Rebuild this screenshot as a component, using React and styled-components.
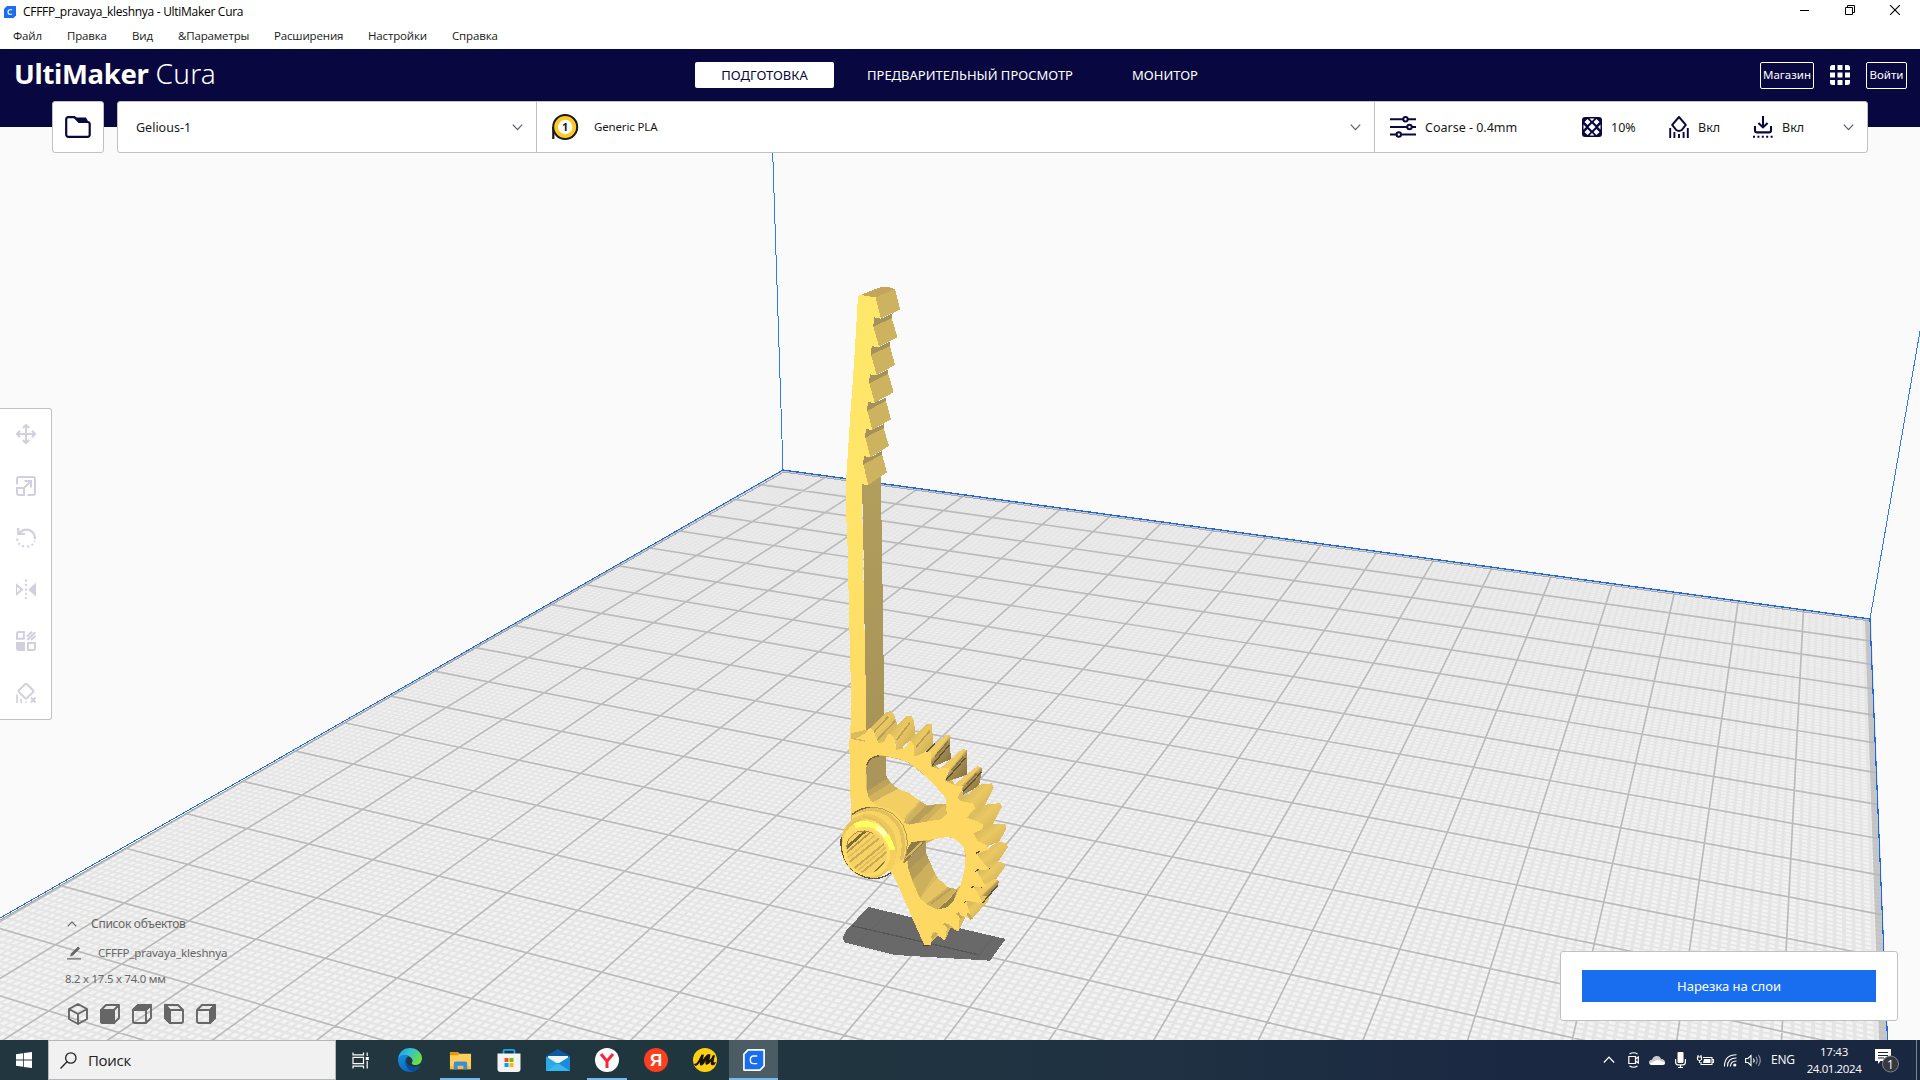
import React from 'react';
import styled, { createGlobalStyle } from 'styled-components';

const NAVY = '#08073f';
const GREY = '#c0c1c2';

const Global = createGlobalStyle`
  * { box-sizing: border-box; }
  html, body { margin: 0; padding: 0; overflow: hidden; background: #fff; }
  svg { display: block; flex: none; }
`;

const Shell = styled.div`
  width: 1920px;
  height: 1080px;
  display: flex;
  flex-direction: column;
  font-family: "Noto Sans", "Open Sans", sans-serif;
  color: #191919;
  overflow: hidden;
`;

const Label = styled.span`
  flex: none;
  white-space: nowrap;
  width: ${p => (p.$w ? `${p.$w}px` : 'auto')};
  font-size: ${p => p.$size || 12}px;
  font-weight: ${p => p.$weight || 400};
  letter-spacing: ${p => p.$ls || 0}px;
  color: ${p => p.$color || 'inherit'};
  margin-left: ${p => p.$ml || 0}px;
  padding-bottom: ${p => (p.$up ? 2 : 0)}px;
`;

const Icon = styled.svg`
  margin-left: ${p => p.$ml || 0}px;
  overflow: visible;
`;

const TitleBar = styled.div`
  height: 24px;
  flex: none;
  display: flex;
  align-items: center;
  padding-left: 4px;
  font-family: "Open Sans", "Noto Sans", sans-serif;
  color: #000;
`;

const WindowButtons = styled.div`
  margin-left: auto;
  display: flex;
  align-items: center;
  gap: 35px;
  padding: 0 20px 4px 0;
`;

const MenuBar = styled.div`
  height: 25px;
  flex: none;
  display: flex;
  align-items: center;
  padding-left: 13px;
  font-family: "Open Sans", "Noto Sans", sans-serif;
`;

const Stage = styled.div`
  flex: none;
  height: 991px;
  display: grid;
  grid-template: 991px / 1920px;
`;

const Scene = styled.svg`
  grid-area: 1 / 1;
  background: #fafafa;
`;

const Overlay = styled.div`
  grid-area: 1 / 1;
  display: flex;
  flex-direction: column;
  z-index: 1;
`;

const Header = styled.div`
  height: 78px;
  flex: none;
  background: ${NAVY};
`;

const HeaderRow = styled.div`
  height: 52px;
  display: flex;
  align-items: center;
  color: #fff;
`;

const Logo = styled.div`
  width: 680px;
  padding: 0 0 4px 14px;
  display: flex;
  align-items: baseline;
  gap: 7px;
`;

const Tab = styled.div`
  height: 26px;
  width: ${p => p.$w}px;
  margin-left: ${p => p.$ml}px;
  border-radius: 2px;
  display: flex;
  align-items: center;
  justify-content: center;
  background: ${p => (p.$active ? '#fff' : 'transparent')};
  color: ${p => (p.$active ? NAVY : '#fff')};
`;

const HeaderButton = styled.div`
  height: 27px;
  width: ${p => p.$w}px;
  margin-left: ${p => p.$ml}px;
  border: 1px solid #fff;
  border-radius: 2px;
  display: flex;
  align-items: center;
  justify-content: center;
`;

const SettingsBar = styled.div`
  height: 52px;
  display: flex;
  padding-left: 52px;
  gap: 13px;
`;

const Panel = styled.div`
  height: 52px;
  display: flex;
  background: #fff;
  border: 1px solid ${GREY};
  border-radius: 3px;
  width: ${p => p.$w}px;
`;

const OpenButton = styled(Panel)`
  align-items: center;
  justify-content: center;
`;

const Section = styled.div`
  width: ${p => p.$w}px;
  padding-left: ${p => p.$pl}px;
  display: flex;
  align-items: center;
  border-right: ${p => (p.$last ? 'none' : `1px solid ${GREY}`)};
`;

const Workspace = styled.div`
  flex: 1;
  display: flex;
  flex-direction: column;
  padding-top: 281px;
`;

const ToolColumn = styled.div`
  width: 52px;
  height: 312px;
  background: #fff;
  border: 1px solid ${GREY};
  border-left: none;
  border-radius: 0 3px 3px 0;
  padding: 15px 0 0 16px;
  display: flex;
  flex-direction: column;
  gap: 31.8px;
`;

const BottomRow = styled.div`
  margin-top: 191px;
  display: flex;
  justify-content: space-between;
  padding: 0 22px 0 65px;
`;

const ObjectList = styled.div`
  display: flex;
  flex-direction: column;
  color: #666;
`;

const ObjectRow = styled.div`
  display: flex;
  align-items: center;
  height: ${p => p.$h}px;
  gap: ${p => p.$gap || 0}px;
  padding-left: ${p => p.$pl || 0}px;
`;

const SlicePanel = styled.div`
  margin-top: 40px;
  width: 338px;
  height: 70px;
  background: #fff;
  border: 1px solid ${GREY};
  border-radius: 3px;
  display: flex;
  align-items: center;
  justify-content: center;
`;

const SliceButton = styled.div`
  width: 294px;
  height: 32px;
  background: #196ef0;
  color: #fff;
  display: flex;
  align-items: center;
  justify-content: center;
`;

const Taskbar = styled.div`
  flex: none;
  height: 40px;
  display: flex;
  background: linear-gradient(90deg, #22363f 0%, #20363f 38%, #1f3142 60%, #1a2842 80%, #1a2741 100%);
  color: #fff;
  font-family: "Open Sans", "Noto Sans", sans-serif;
`;

const StartButton = styled.div`
  width: 48px;
  display: flex;
  align-items: center;
  justify-content: center;
`;

const SearchBox = styled.div`
  width: 288px;
  background: #f1f1f1;
  border: 1px solid #b5b8ba;
  display: flex;
  align-items: center;
  padding-left: 11px;
  color: #222;
`;

const TaskItem = styled.div`
  width: ${p => p.$w || 49}px;
  display: flex;
  align-items: center;
  justify-content: center;
  background: ${p => (p.$active ? '#4c5c65' : 'transparent')};
  box-shadow: ${p => (p.$active ? 'inset 0 -2px #76b9ed' : 'none')};
`;

const Running = styled.div`
  width: 40px;
  height: 40px;
  display: flex;
  align-items: center;
  justify-content: center;
  border-bottom: 2px solid #76b9ed;
  padding-top: 2px;
`;

const Tray = styled.div`
  margin-left: auto;
  display: flex;
  align-items: center;
  width: 317px;
`;

const Clock = styled.div`
  width: 70px;
  margin-left: 3px;
  display: flex;
  flex-direction: column;
  align-items: center;
  line-height: 17px;
  padding-bottom: 1px;
`;

const ShowDesktop = styled.div`
  width: 1px;
  height: 40px;
  background: #7b8493;
  margin-left: 17px;
`;

/* ---------- build plate ---------- */

// Perspective mapping of plate coordinates (in cm) to the viewport.
const project = (u, v) => {
  const w = 1 - 0.00982 * u - 0.0225 * v;
  return [(782.6 + 36.02 * u - 41.44 * v) / w, (470.4 + 1.364 * u + 3.15 * v) / w];
};
const pt = (u, v) => project(u, v).map(n => n.toFixed(2)).join(' ');
const line = (a, b) => `M${a}L${b}`;
const quad = (a, b, c, d) => `M${a}L${b}L${c}L${d}Z`;
const range = n => Array.from({ length: n + 1 }, (_, i) => i);

const DEPTH = 26;
const HW = 0.019;
const minorU = range(200).filter(i => i % 10).map(i => quad(pt(i / 10 - HW, 0), pt(i / 10 + HW, 0), pt(i / 10 + HW, DEPTH), pt(i / 10 - HW, DEPTH))).join('');
const minorV = range(DEPTH * 10).filter(i => i % 10).map(i => quad(pt(0, i / 10 - HW), pt(0, i / 10 + HW), pt(20, i / 10 + HW), pt(20, i / 10 - HW))).join('');
const major =
  range(19).map(i => line(pt(i, 0), pt(i, DEPTH))).join('') +
  range(DEPTH).map(i => line(pt(0, i), pt(20, i))).join('');
const plate = quad(pt(0, 0), pt(20, 0), pt(20, DEPTH), pt(0, DEPTH));

/* ---------- model ---------- */

const bladeTeeth = [
  ['160,170 215,145 233,202 177,230', '162,142 183,146 218,130 215,146 160,171'],
  ['153,255 210,228 225,285 170,315', '155,229 177,231 210,215 210,229 153,256'],
  ['148,340 205,312 221,367 164,398', '149,313 170,315 204,299 205,313 148,341'],
  ['142,423 198,392 213,448 157,480', '143,397 164,398 198,383 198,393 142,424'],
  ['136,503 191,474 207,528 151,562', '137,477 157,480 192,462 191,475 136,504'],
  ['130,584 186,553 201,607 145,645', '131,558 151,562 186,543 186,554 130,585'],
];

const gearTeeth = [
  ['148,116 200,67 212,63 222,72 230,98 232,112 180,165 162,124', 0],
  ['206,130 260,79 275,77 282,95 287,137 232,184 224,150', 0],
  ['266,152 322,101 336,102 340,170 284,204 280,166', 0],
  ['314,190 378,134 391,137 391,165 392,208 335,232 333,186', 1],
  ['360,236 428,176 440,180 440,206 441,254 376,276 388,238', 1],
  ['398,288 474,227 486,234 484,252 477,288 430,314 424,290', 1],
  ['420,332 478,284 516,280 521,293 498,340 440,387 430,350', 0],
  ['440,385 490,345 540,339 546,350 520,400 460,436', 0],
  ['458,435 510,402 556,402 560,414 538,454 472,482', 0],
  ['470,500 535,454 560,460 564,472 535,514 490,540', 0],
  ['470,548 530,513 553,520 554,531 530,566 480,592', 0],
  ['460,600 525,566 537,573 535,583 486,640', 1],
  ['430,665 485,618 508,620 505,632 455,688', 0],
];

const HOLE_A = 'M197 199 L235 208 L265 218 L300 245 L330 270 L378 325 L380 340 L350 346 L320 345 L300 332 L265 308 L235 297 L210 276 L198 255 Z';
const HOLE_B = 'M318 460 L345 447 L370 441 L390 442 L412 452 L430 470 L436 495 L433 545 L425 582 L411 597 L385 593 L362 578 L345 550 L330 515 L318 490 Z';

const Model = () => (
  <g shapeRendering="crispEdges">
    <g transform="translate(820 690) scale(.33333)">
      <polygon points="145,651 280,683 420,715 557,747 510,812 225,795 72,757 69,740 78,722" fill="#696969" />
      <path d="M95 707 L470 793" stroke="#565656" strokeWidth="4" />
      <path d="M120 752 L205 668 M520 738 L470 806" stroke="#626262" strokeWidth="3" />
    </g>
    <g transform="translate(820 270) scale(.33333)">
      <polygon points="126,640 183,620 185,790 190,1090 192,1340 138,1390 130,800" fill="url(#shaft)" />
      <polygon points="114,78 122,75 167,82 190,146 165,142 160,170 177,230 155,229 153,255 172,315 149,313 148,340 166,398 143,397 142,423 160,480 137,477 136,503 153,562 131,558 130,584 147,645 126,643 127,735 131,960 138,1280 138,1410 90,1410 94,1300 88,1070 82,800 78,730 78,640 91,430 98,340 107,200" fill="url(#face)" />
      <polygon points="122,75 180,52 205,51 225,57 167,82" fill="#c3a659" />
      <polygon points="167,82 225,57 240,118 183,146" fill="#cdb25f" />
      {bladeTeeth.map(([side, notch]) => (
        <g key={side}>
          <polygon points={notch} fill="#a59159" />
          <polygon points={side} fill="#cdb25f" />
        </g>
      ))}
    </g>
    <g transform="translate(820 690) scale(.33333)">
      <path
        d={`M92 130 L145 118 L190 150 L229 165 L282 185 L333 215 L385 260 L430 310 L465 350 L490 410 L505 470 L508 535 L500 590 L487 640 L455 688 L440 675 L415 725 L392 712 L375 752 L355 735 L325 767 L313 765 L218 550 L95 470 Z ${HOLE_A} ${HOLE_B}`}
        fill="#dabb5f" fillRule="evenodd" />
      {gearTeeth.map(([p, dark]) => (
        <polygon key={p} points={p} fill={dark ? 'url(#toothDark)' : 'url(#tooth)'} />
      ))}
      <path d="M158 130 L205 80 M172 150 L226 92 M230 150 L270 98 M288 172 L330 122" stroke="#b99e55" strokeWidth="5" />
      <path d="M336 226 L388 165 M378 270 L437 203 M430 305 L484 247 M488 638 L535 584 M314 190 L345 161" stroke="#5d5137" strokeWidth="4" />
      <path d="M345 200 L384 155 M396 240 L430 200 M440 283 L470 250" stroke="#8b7747" strokeWidth="5" />
      <path
        d="M88 146 L110 145 L138 128 L145 118 L152 115 L162 124 L175 160 L192 155 L203 135 L210 130 L220 140 L226 160 L229 180 L255 174 L266 158 L274 152 L281 166 L282 200 L300 194 L315 187 L334 186 L333 230 L352 236 L375 234 L389 236 L374 272 L388 278 L410 288 L430 288 L412 325 L425 334 L460 340 L465 354 L440 383 L468 392 L490 404 L487 418 L460 430 L472 452 L500 466 L508 478 L470 492 L492 520 L508 538 L470 540 L488 575 L500 592 L462 590 L478 620 L487 640 L438 632 L448 665 L455 688 L420 675 L415 725 L383 700 L375 752 L338 725 L333 765 L313 765 L305 748 L218 550 L95 470 L95 375 L90 300 Z
           M138 230 L146 210 L160 199 L180 195 L200 198 L235 206 L265 217 L300 243 L332 272 L378 325 L380 372 L362 388 L320 396 L268 404 L240 372 L190 352 L150 332 L139 300 Z
           M262 520 L275 455 L318 450 L345 447 L370 440 L392 442 L412 452 L430 470 L437 495 L433 545 L420 590 L400 635 L380 652 L352 659 L325 645 L300 625 L275 570 Z"
        fill="#fdd964" fillRule="evenodd" />
      <path d="M139 232 L146 212 L160 200 L197 198 L198 255 L205 268 L141 305 Z" fill="#aa965a" />
      <path d="M141 303 L203 265 L212 280 L145 320 Z" fill="#bea45a" />
      <path d="M145 320 L212 279 L235 297 L158 336 Z" fill="#d1b25d" />
      <path d="M158 336 L235 297 L265 308 L300 332 L240 398 L185 360 Z" fill="#f3cf63" />
      <path d="M250 398 L303 335 L320 345 L378 341 L380 372 L362 388 L270 404 Z" fill="#cfb15d" />
      <path d="M262 402 L316 347 L350 346 L290 400 Z" fill="#b99f57" />
      <path d="M320 396 L368 348 L380 350 L378 374 L362 388 Z" fill="#dfbe60" />
      <path d="M270 403 L362 388 L382 370 L400 400 L380 441 L345 447 L273 456 Z" fill="#fdd964" />
      <path d="M262 510 L318 450 L318 490 L266 540 Z" fill="#aa965a" />
      <path d="M266 540 L318 490 L330 515 L278 570 Z" fill="#b79e57" />
      <path d="M278 570 L330 515 L345 550 L300 625 Z" fill="#cdb05c" />
      <path d="M300 625 L352 563 L385 593 L320 642 Z" fill="#e6c461" />
      <path d="M318 642 L383 592 L411 597 L352 659 Z" fill="#cfb15d" />
      <path d="M352 659 L388 628 L412 598 L400 635 L380 652 Z" fill="#96834c" />
      <path d="M334 640 L392 596" stroke="#b99f57" strokeWidth="6" />
      <path d="M252 520 L300 470 L318 452 L275 456 L260 480 Z" fill="#8d7b4a" />
      <path d="M255 505 L305 458" stroke="#d7b75e" strokeWidth="6" />
      <path d="M141 225 Q148 200 178 197" stroke="#6c5d3b" strokeWidth="4" fill="none" />
      <path d="M94 145 L134 153" stroke="#d4b45c" strokeWidth="4" />
      <path d="M335 745 L350 728 M388 712 L372 700 M425 685 L412 668 M442 670 L455 688" stroke="#cba953" strokeWidth="8" />
      <path d="M310 767 H326 M467 490 L480 484 M465 545 L476 538 M455 595 L460 588 M432 638 L438 634" stroke="#4d432c" strokeWidth="4" />
      <path d="M507 535 h3 M484 592 h3" stroke="#e01010" strokeWidth="3" />

      <ellipse cx="180" cy="447" rx="84" ry="96" fill="#f8d462" />
      <path d="M98 374 Q140 342 190 357 Q245 378 258 430 Q268 470 250 520" stroke="#b89d55" strokeWidth="3" fill="none" />
      <path d="M103 370 Q145 350 185 364 Q232 384 246 430 Q255 470 244 510" stroke="#e2c05f" strokeWidth="10" fill="none" />
      <path d="M96 374 Q120 354 150 352" stroke="#7a693f" strokeWidth="4" fill="none" />
      <ellipse cx="146" cy="469" rx="84" ry="97" fill="#ecc95f" transform="rotate(-12 146 469)" />
      <path d="M64 440 Q58 480 80 520 Q112 562 158 566 Q190 566 212 548" stroke="#62543a" strokeWidth="4" fill="none" />
      <ellipse cx="143" cy="474" rx="76" ry="86" fill="#ffdc66" transform="rotate(-12 143 474)" />
      <path d="M78 420 Q95 396 122 390 M130 380 Q180 385 205 430" stroke="#e2c05f" strokeWidth="6" fill="none" />
      <path d="M104 407 Q135 396 165 408 Q205 432 218 482" stroke="#ffff61" strokeWidth="17" fill="none" />
      <path d="M170 412 Q184 420 197 438" stroke="#ffffae" strokeWidth="16" fill="none" />
      <path d="M219 480 Q222 515 205 536" stroke="#f5cf5e" strokeWidth="16" fill="none" />
      <clipPath id="bore"><ellipse cx="140" cy="485" rx="60" ry="65" transform="rotate(-14 140 485)" /></clipPath>
      <g clipPath="url(#bore)">
        <rect x="70" y="410" width="150" height="150" fill="#f6d263" />
        <path d="M70 458 L118 412 M74 478 L135 424" stroke="#7a683f" strokeWidth="8" />
        <path d="M75 492 L150 428" stroke="#b3974f" strokeWidth="5" />
        <path d="M88 516 L176 446 M103 535 L192 462 M122 550 L205 482" stroke="#c9aa57" strokeWidth="6" />
        <path d="M82 504 L165 436 M112 543 L200 470" stroke="#e0bd5e" strokeWidth="5" />
        <path d="M158 552 L204 505" stroke="#8a743f" strokeWidth="5" />
      </g>
      <path d="M80 470 Q82 440 112 426 Q135 418 158 430" stroke="#a58b4b" strokeWidth="3" fill="none" />
    </g>
  </g>
);

const Viewport3D = () => (
  <Scene width="1920" height="991" viewBox="0 49 1920 991">
    <defs>
      <linearGradient id="plateFill" x1="0" y1="470" x2="0" y2="1040" gradientUnits="userSpaceOnUse">
        <stop offset="0" stopColor="#ececec" />
        <stop offset=".45" stopColor="#f1f1f1" />
        <stop offset="1" stopColor="#f4f4f4" />
      </linearGradient>
      <linearGradient id="face" x1="0" y1="0" x2="0" y2="1">
        <stop offset="0" stopColor="#ffe869" />
        <stop offset=".5" stopColor="#ffe469" />
        <stop offset="1" stopColor="#fdd964" />
      </linearGradient>
      <linearGradient id="shaft" x1="0" y1="0" x2="0" y2="1">
        <stop offset="0" stopColor="#b19d5c" />
        <stop offset="1" stopColor="#a89458" />
      </linearGradient>
      <linearGradient id="tooth" x1="0" y1="0" x2="1" y2="1">
        <stop offset="0" stopColor="#c9ab59" />
        <stop offset=".45" stopColor="#eac862" />
        <stop offset="1" stopColor="#c2a556" />
      </linearGradient>
      <linearGradient id="toothDark" x1="0" y1="0" x2="1" y2="1">
        <stop offset="0" stopColor="#e9c661" />
        <stop offset=".48" stopColor="#f0cc62" />
        <stop offset=".56" stopColor="#a89050" />
        <stop offset="1" stopColor="#7d6b40" />
      </linearGradient>
    </defs>
    <path d={plate} fill="url(#plateFill)" />
    <path d={minorU} fill="#e5e5e5" />
    <path d={minorV} fill="#e5e5e5" />
    <path d={major} stroke="#bbb" strokeWidth="1.7" fill="none" />
    <polygon points="1865,621 1871,620 1888,1040 1879,1040" fill="#b4b4b4" fillOpacity=".7" />
    <g shapeRendering="crispEdges" fill="none" strokeWidth="1">
      <path d="M784 472 L0 920" stroke="#a8a8a8" />
      <path d="M783 472 L1870 621" stroke="#aaa" />
      <path d="M783 470 L0 918" stroke="#1c6ae0" />
      <path d="M771 100 L783 470 M1920 331 L1870 619" stroke="#2f7cf0" />
      <path d="M783 470 L1870 619" stroke="#1c6ae0" strokeWidth="1.3" />
      <path d="M1870 619 L1887.5 1040" stroke="#1c6ae0" strokeWidth="1.2" />
    </g>
    <Model />
  </Scene>
);

/* ---------- icons ---------- */

const Chevron = ({ ml, up, color = '#5c5c6b', w = 11 }) => (
  <Icon $ml={ml} width={w} height={w * 0.6} viewBox="0 0 11 6.6" fill="none" stroke={color} strokeWidth="1.2">
    <path d={up ? 'M.8 6 L5.5 1 L10.2 6' : 'M.8 .6 L5.5 5.6 L10.2 .6'} />
  </Icon>
);

const FolderIcon = () => (
  <svg width="26" height="22" viewBox="0 0 26 22">
    <path d="M3.2 1.2 H9.5 L14 6 H22.5 A2 2 0 0 1 24.7 8 V18.8 A2 2 0 0 1 22.6 20.8 H3.4 A2.1 2.1 0 0 1 1.2 18.8 V3.2 A2 2 0 0 1 3.2 1.2Z" fill="none" stroke={NAVY} strokeWidth="2.2" />
    <path d="M10.5 1.6 H21 L24 7 H14.5Z" fill={NAVY} />
  </svg>
);

const SpoolIcon = () => (
  <Icon width="27" height="27" viewBox="0 0 27 27">
    <path d="M1.3 25 V13" stroke="#191919" strokeWidth="2.2" />
    <circle cx="13.2" cy="13" r="12" fill="#ffc924" stroke="#191919" strokeWidth="2" />
    <circle cx="13.2" cy="13" r="7.2" fill="#fff" />
    <text x="13.2" y="16.800" fontSize="11" fontWeight="700" textAnchor="middle" fill="#191919" fontFamily="Noto Sans">1</text>
  </Icon>
);

const SlidersIcon = () => (
  <svg width="26" height="22" viewBox="0 0 26 22" fill="none" stroke={NAVY} strokeWidth="2">
    <path d="M0 3.3H13 M18 3.3H26 M0 11H17 M22 11H26 M0 18.5H6 M11.5 18.5H26" />
    <circle cx="15.5" cy="3.3" r="2.2" /><circle cx="19.5" cy="11" r="2.2" /><circle cx="8.8" cy="18.5" r="2.2" />
  </svg>
);

const InfillIcon = () => (
  <Icon $ml={65} width="20" height="20" viewBox="0 0 20 20">
    <rect width="20" height="20" rx="3" fill={NAVY} />
    <path
      fill="#fff"
      d="M10 6.500 l3.500 3.500 -3.500 3.500 -3.500 -3.500z M5.500 2 l3 3 -3 3 -3 -3z M14.500 2 l3 3 -3 3 -3 -3z M5.500 12 l3 3 -3 3 -3 -3z M14.500 12 l3 3 -3 3 -3 -3z M7.500 1.500 h5 l-2.500 2.500z M7.500 18.500 h5 l-2.500 -2.500z M1.500 7.500 v5 l2.500 -2.500z M18.500 7.500 v5 l-2.500 -2.500z" />
  </Icon>
);

const SupportIcon = () => (
  <Icon $ml={33} width="20" height="22" viewBox="0 0 20 22" fill="none" stroke={NAVY} strokeWidth="2">
    <path d="M10 1 L16.800 8.800 L12.800 14 Q10 15.800 7.200 14 L3.200 8.800Z" strokeLinejoin="round" />
    <path d="M1.200 12V22 M5.400 16V22 M10 18V22 M14.600 16V22 M18.800 12V22" strokeWidth="1.9" />
  </Icon>
);

const AdhesionIcon = () => (
  <Icon $ml={33} width="20" height="22" viewBox="0 0 20 22" fill="none" stroke={NAVY} strokeWidth="2.1">
    <path d="M10 0V11 M5.4 7 L10 11.4 L14.6 7 M2 10V14.5 Q2 16.4 4 16.4 H16 Q18 16.4 18 14.5 V10" />
    <path d="M0 20.8H20" strokeDasharray="2 2.4" />
  </Icon>
);

const TOOL = '#d2cfdf';
const ToolIcon = ({ children }) => (
  <svg width="20" height="20" viewBox="0 0 20 20" fill="none" stroke={TOOL} strokeWidth="2">{children}</svg>
);

const tools = [
  <path key="m" d="M10 1V19 M1 10H19 M6.8 4 L10 1 L13.2 4 M6.8 16 L10 19 L13.2 16 M4 6.8 L1 10 L4 13.2 M16 6.8 L19 10 L16 13.2" />,
  <g key="s"><path d="M1 8.5V3Q1 1 3 1H17Q19 1 19 3V17Q19 19 17 19H11.5" /><path d="M1 12H8V19H3Q1 19 1 17Z" /><path d="M8 12L14.5 5.5 M8.500 5H15V11.5" /></g>,
  <g key="r"><path d="M2.200 0V6H9 M2.800 5.600 Q7 .8 12.500 1.800 Q19 4 19 11" strokeWidth="2.200" /><path d="M1 10.500Q2 18 9.500 18.600Q17 19 18.600 12.500" strokeDasharray="2 2.700" /></g>,
  <g key="i" transform="translate(0 .6)"><path d="M0 5L6 10L0 15Z" /><path d="M20 4V16L13.5 10Z" fill={TOOL} strokeWidth="1.8" strokeLinejoin="round" /><path d="M10 0V20" strokeDasharray="2 2.4" /></g>,
  <g key="p"><path d="M3 1H7.8V7.8H1V3Q1 1 3 1Z M12 12H19V17Q19 19 17 19H12Z" /><path d="M0 11H9V20H3Q0 20 0 17Z" fill={TOOL} stroke="none" /><path d="M11 5.5L16 .7 M11.3 9 L19.3 1.2 M15 9L19.6 4.6" /></g>,
  <g key="b"><path d="M9 1.2 Q10 .2 11 1.2 L17 7.2Q17.8 8.2 17 9.2L11 15Q10 15.8 9 15L3 9.2Q2.2 8.2 3 7.2Z" /><path d="M1 11.5V21 M5 16V21 M10 18.6V21" strokeWidth="1.6" /><path d="M15 14.5L19.5 19.5 M19.5 14.5L15 19.5" /></g>,
];

const cube = { fill: 'none', stroke: '#666', strokeWidth: 1.9, strokeLinejoin: 'round' };
const Cube = ({ children }) => <svg width="20" height="22" viewBox="0 0 20 22" {...cube}>{children}</svg>;
const FRONT = 'M1 7H14V20H3Q1 20 1 18Z M1 7L6 2H19L14 7 M19 2V15L14 20';
const FRONT_MIRROR = 'M19 7H6V20H17Q19 20 19 18Z M19 7L14 2H1L6 7 M1 2V15L6 20';

const TaskSvg = ({ children, w = 24 }) => <svg width={w} height={w} viewBox="0 0 24 24">{children}</svg>;

const EdgeLogo = () => (
  <TaskSvg>
    <defs>
      <linearGradient id="eg1" x1="0" y1="0" x2="1" y2=".5"><stop offset="0" stopColor="#1b9de2" /><stop offset=".5" stopColor="#35c1d0" /><stop offset="1" stopColor="#69e045" /></linearGradient>
      <linearGradient id="eg2" x1="0" y1="0" x2="1" y2="1"><stop offset="0" stopColor="#1192df" /><stop offset="1" stopColor="#0a56a8" /></linearGradient>
    </defs>
    <path d="M0 11C1 3 7 0 12 0C19 0 24 5 24 10C24 14.5 21 17 17.5 17C14.5 17 13 15.5 14 14.5C15.5 12.5 14 9 10 8C6 7 1 8 0 11Z" fill="url(#eg1)" />
    <path d="M0 11C1 7 7 5.500 11 8C8 9 7 13 9 16C11 19.500 17 20.500 22.300 18C20 22 16 24 12 24C5 24 0 19 0 11Z" fill="url(#eg2)" />
    <path d="M8.500 9.500C6 13 7.500 20 13 23C17.500 23.500 21 21 22.400 17.500C17 20 11 19 9 15C8 13 8 11 8.500 9.500Z" fill="#0c4c94" />
  </TaskSvg>
);

const ExplorerLogo = () => (
  <TaskSvg w={23}>
    <path d="M1 3H9L11 5H23V21H1Z" fill="#fed05b" /><path d="M1 3H9L11 5L9 6.500H1Z" fill="#e19a0c" />
    <path d="M1 18H23V21H1Z" fill="#f4bd3b" />
    <path d="M5 21V15Q5 13 7 13H17Q19 13 19 15V21H15V17.500H9V21Z" fill="#3a8fdc" />
  </TaskSvg>
);

const StoreLogo = () => (
  <TaskSvg>
    <path d="M6.500 6V3Q6.500 1.800 8 1.800H16Q17.500 1.800 17.500 3V6" fill="none" stroke="#18a8f0" strokeWidth="1.8" />
    <path d="M.5 5.500H23.500V21Q23.500 24 20.500 24H3.500Q.5 24 .5 21Z" fill="#f3f3f3" />
    <path d="M7.500 10H11.500V14H7.500Z" fill="#f25022" /><path d="M12.500 10H16.500V14H12.500Z" fill="#7fba00" />
    <path d="M7.500 15H11.500V19H7.500Z" fill="#00a4ef" /><path d="M12.500 15H16.500V19H12.500Z" fill="#ffb900" />
  </TaskSvg>
);

const MailLogo = () => (
  <TaskSvg>
    <path d="M0 8L12 1L24 8V12H0Z" fill="#0c59a4" /><path d="M2 8H22V15H2Z" fill="#f1f3f5" />
    <path d="M0 8.500L12 16L24 8.500V23H0Z" fill="#2aa8ea" /><path d="M24 8.500L0 23H24Z" fill="#1a8bdc" /><path d="M0 23L12 15L24 23Z" fill="#37b8f1" />
  </TaskSvg>
);

const Icons = {
  taskview: (
    <svg width="17" height="17" viewBox="0 0 17 17" fill="none" stroke="#fff" strokeWidth="1.2">
      <path d="M1 .5V2.800H11.500V.5 M1 5.300H11.500V11.700H1Z M1 16.500V14.200H11.500V16.500 M15.200 .5V4 M15.200 9V16.500" /><path d="M13.700 5H16.800V8H13.700Z" fill="#fff" stroke="none" />
    </svg>
  ),
  yandex: <TaskSvg><circle cx="12" cy="12" r="12" fill="#fff" /><path d="M6 6L12 13.200L18 6 M12 13V20" fill="none" stroke="#f5283c" strokeWidth="3" /></TaskSvg>,
  ya: <TaskSvg><circle cx="12" cy="12" r="12" fill="#fc3f1d" /><text x="12" y="18" textAnchor="middle" fontFamily="Liberation Sans" fontWeight="700" fontSize="17" fill="#fff">Я</text></TaskSvg>,
  music: (
    <TaskSvg>
      <circle cx="12" cy="12" r="12" fill="#ffd012" />
      <path d="M.8 15.800Q3.500 16.500 5.500 12.500L8.500 6.500L11 6.800L9.800 11.500Q12 8 15 6L17.500 6.500L16.500 12.200Q18.500 10.500 20 7L22 7.500Q20 13.500 21 14.500L23.200 14.200Q21.500 17.800 18.800 17.200Q17.200 16.500 17.800 13.500Q15.500 17 13.200 16.800Q11.800 16 12.800 12.200Q10.500 17.800 7.500 17.500Q6.300 17 6.800 14Q4.500 18.500 1.800 17.500Z" fill="#17130a" />
    </TaskSvg>
  ),
  cura: <TaskSvg w={22}><path d="M5.500 1H23V18.500L18.500 23H1V5.500Z" fill="#196ef0" stroke="#fff" strokeWidth="1.800" strokeLinejoin="round" /><path d="M15.500 7.700H11.500Q8 7.700 8 12Q8 16 11.500 16H15.500" fill="none" stroke="#fff" strokeWidth="1.500" /></TaskSvg>,
};

const menu = [['Файл', 54], ['Правка', 65], ['Вид', 46], ['&Параметры', 96], ['Расширения', 94], ['Настройки', 84], ['Справка', 60]];

export default function App() {
  return (
    <Shell>
      <Global />
      <TitleBar>
        <svg width="12" height="12" viewBox="0 0 12 12"><path d="M3 0H12V9.500L9.500 12H0V3Z" fill="#196ef0" /><path d="M8.200 3.700H6Q4 3.700 4 6Q4 8.300 6 8.300H8.200" fill="none" stroke="#fff" strokeWidth="1.100" /></svg>
        <Label $up $size={12} $ml={7} $ls={-0.29}>CFFFP_pravaya_kleshnya - UltiMaker Cura</Label>
        <WindowButtons>
          <svg width="10" height="10" viewBox="0 0 10 10"><path d="M-1 5.500H9" stroke="#000" overflow="visible" /></svg>
          <svg width="10" height="10" viewBox="0 0 10 10" fill="none" stroke="#000"><path d="M.5 2.500H7.500V9.500H.5Z M2.500 2.500V.5H9.500V7.500H7.500" /></svg>
          <svg width="10" height="10" viewBox="0 0 10 10"><path d="M0 0L10 10M10 0L0 10" stroke="#000" strokeWidth="1.100" /></svg>
        </WindowButtons>
      </TitleBar>
      <MenuBar>
        {menu.map(([t, w]) => <Label key={t} $up $size={11.5} $w={w} $ls={-0.15}>{t}</Label>)}
      </MenuBar>
      <Stage>
        <Viewport3D />
        <Overlay>
          <Header>
            <HeaderRow>
              <Logo>
                <Label $size={27.5} $weight={700} $ls={-0.3}>UltiMaker</Label>
                <Label $size={28} $weight={300} $ls={0.2}>Cura</Label>
              </Logo>
              <Tab $w={139} $ml={15} $active><Label $size={13}>ПОДГОТОВКА</Label></Tab>
              <Tab $w={240} $ml={16}><Label $size={13}>ПРЕДВАРИТЕЛЬНЫЙ ПРОСМОТР</Label></Tab>
              <Tab $w={100} $ml={25}><Label $size={13}>МОНИТОР</Label></Tab>
              <HeaderButton $w={54} $ml={545}><Label $up $size={11.5}>Магазин</Label></HeaderButton>
              <Icon $ml={16} width="20" height="20" viewBox="0 0 20 20" fill="#fff">
                <path d="M0 5V2.500Q0 0 2.500 0H5V5Z M7.500 0H12.500V5H7.500Z M15 0H17.500Q20 0 20 2.500V5H15Z M0 7.500H5V12.500H0Z M7.500 7.500H12.500V12.500H7.500Z M15 7.500H20V12.500H15Z M0 15H5V20H2.500Q0 20 0 17.500Z M7.500 15H12.500V20H7.500Z M15 15H20V17.500Q20 20 17.500 20H15Z" />
              </Icon>
              <HeaderButton $w={41} $ml={16}><Label $up $size={11.5}>Войти</Label></HeaderButton>
            </HeaderRow>
            <SettingsBar>
              <OpenButton $w={52}><FolderIcon /></OpenButton>
              <Panel $w={1751}>
                <Section $w={419} $pl={18}>
                  <Label $size={12.5} $w={376}>Gelious-1</Label>
                  <Chevron />
                </Section>
                <Section $w={838} $pl={15}>
                  <SpoolIcon />
                  <Label $up $size={11.5} $ls={-0.15} $ml={15} $w={756}>Generic PLA</Label>
                  <Chevron />
                </Section>
                <Section $w={492} $pl={15} $last>
                  <SlidersIcon />
                  <Label $size={12.5} $ml={9} $w={92}>Coarse - 0.4mm</Label>
                  <InfillIcon />
                  <Label $size={12.5} $ml={9} $w={25}>10%</Label>
                  <SupportIcon />
                  <Label $size={12.5} $ml={9} $w={22}>Вкл</Label>
                  <AdhesionIcon />
                  <Label $size={12.5} $ml={9} $w={61}>Вкл</Label>
                  <Chevron />
                </Section>
              </Panel>
            </SettingsBar>
          </Header>
          <Workspace>
            <ToolColumn>{tools.map(t => <ToolIcon key={t.key}>{t}</ToolIcon>)}</ToolColumn>
            <BottomRow>
              <ObjectList>
                <ObjectRow $h={26} $pl={2}>
                  <Chevron up color="#666" w={10} />
                  <Label $up $size={12} $ls={-0.28} $ml={14}>Список объектов</Label>
                </ObjectRow>
                <ObjectRow $h={32} $pl={2}>
                  <svg width="14" height="14" viewBox="0 0 14 14"><path d="M0 12.800H14" stroke="#888" strokeWidth="1.800" /><path d="M3 10.500L4 7.500L11 .5L13 2.500L6 9.500Z" fill="#666" /></svg>
                  <Label $up $size={11.5} $ls={-0.15} $ml={17}>CFFFP_pravaya_kleshnya</Label>
                </ObjectRow>
                <ObjectRow $h={20}><Label $up $size={11.3} $ls={-0.2}>8.2 x 17.5 x 74.0 мм</Label></ObjectRow>
                <ObjectRow $h={50} $pl={3} $gap={12}>
                  <Cube><path d="M10 1L19 6V16L10 21L1 16V6Z M1 6L10 11L19 6 M10 11V21" /></Cube>
                  <Cube><path d={FRONT} /><path d="M1 7H14V20H3Q1 20 1 18Z" fill="#666" /></Cube>
                  <Cube><path d={FRONT} /><path d="M1 7L6 2H19L14 7Z" fill="#666" /></Cube>
                  <Cube><path d={FRONT_MIRROR} /><path d="M1 2L6 7V20L1 15Z" fill="#666" /></Cube>
                  <Cube><path d={FRONT} /><path d="M14 7L19 2V15L14 20Z" fill="#666" /></Cube>
                </ObjectRow>
              </ObjectList>
              <SlicePanel><SliceButton><Label $size={13}>Нарезка на слои</Label></SliceButton></SlicePanel>
            </BottomRow>
          </Workspace>
        </Overlay>
      </Stage>
      <Taskbar>
        <StartButton>
          <svg width="16" height="16" viewBox="0 0 16 16" fill="#fff"><path d="M0 2.200L7 1.200V7.600H0Z M7.800 1.100L16 0V7.600H7.800Z M0 8.400H7V14.800L0 13.800Z M7.800 8.400H16V16L7.800 14.900Z" /></svg>
        </StartButton>
        <SearchBox>
          <svg width="17" height="17" viewBox="0 0 17 17" fill="none" stroke="#222" strokeWidth="1.300"><circle cx="10.800" cy="6" r="5.200" /><path d="M7 9.800L.5 16.500" /></svg>
          <Label $size={15} $ls={-0.3} $ml={11}>Поиск</Label>
        </SearchBox>
        <TaskItem $w={48}>{Icons.taskview}</TaskItem>
        <TaskItem $w={52}><EdgeLogo /></TaskItem>
        <TaskItem $w={48}><Running><ExplorerLogo /></Running></TaskItem>
        <TaskItem><StoreLogo /></TaskItem>
        <TaskItem><MailLogo /></TaskItem>
        <TaskItem><Running>{Icons.yandex}</Running></TaskItem>
        <TaskItem>{Icons.ya}</TaskItem>
        <TaskItem>{Icons.music}</TaskItem>
        <TaskItem $w={49} $active>{Icons.cura}</TaskItem>
        <Tray>
          <Chevron up color="#fff" w={12} />
          <Icon $ml={13} width="11" height="16" viewBox="0 0 11 16" fill="none" stroke="#fff" strokeWidth="1.200"><path d="M.8 4.500H7.500V11.500H.8Z M7.500 7L10.300 5V11L7.500 9 M1.500 2Q5.500 -.5 9.500 2 M1.500 14Q5.500 16.500 9.500 14" /></Icon>
          <Icon $ml={10} width="16" height="11" viewBox="0 0 16 11"><path d="M3.500 10Q0 10 0 7.500Q0 5 3 4.800Q4 1 8 1Q11 1 12 4Q16 4 16 7.500Q16 10 13 10Z" fill="#c9cbcf" /><path d="M3.500 10Q1 10 1 8.500L8 4.800L16 7.500Q16 10 13 10Z" fill="#fff" /></Icon>
          <Icon $ml={10} width="11" height="16" viewBox="0 0 11 16"><rect x="2.500" width="6" height="11" rx="1" fill="#fff" /><path d="M.6 7V10Q.6 12.800 3 12.800H8Q10.400 12.800 10.400 10V7 M5.500 13V15.500 M3 15.500H8" fill="none" stroke="#fff" strokeWidth="1.200" /></Icon>
          <Icon $ml={11} width="17" height="12" viewBox="0 0 17 12" fill="none" stroke="#fff" strokeWidth="1.100"><path d="M6 3.500H15V10.500H4V8 M15 5.500H16.500V8.500H15 M1 1V3 M4 1V3 M.5 3H4.500V5.500Q2.500 8 .5 5.500Z M2.500 7V9" /><path d="M7 5H13.500V9H6Z" fill="#fff" stroke="none" /></Icon>
          <Icon $ml={10} width="13" height="13" viewBox="0 0 13 13" fill="none" stroke="#fff" strokeWidth="1.100"><path d="M.5 12.500Q.5 .8 12.500 .8 M3.500 12.500Q3.500 4 12.500 4 M6.500 12.500Q6.500 7 12.500 7" /><circle cx="10.800" cy="11" r="1.600" fill="#fff" stroke="none" /></Icon>
          <Icon $ml={8} width="17" height="13" viewBox="0 0 17 13" fill="none" stroke="#fff" strokeWidth="1.100"><path d="M.6 4.500H3L6 1.500V11.500L3 8.500H.6Z" /><path d="M8.500 4.500Q9.800 6.500 8.500 8.500" /><path d="M11 2.800Q13.400 6.500 11 10.200 M13.500 1Q17 6.500 13.500 12" stroke="#8c95a3" /></Icon>
          <Label $up $size={12} $ls={-0.2} $ml={9} $w={25}>ENG</Label>
          <Clock><Label $size={11.5} $ls={-0.3}>17:43</Label><Label $size={11.5} $ls={-0.4}>24.01.2024</Label></Clock>
          <Icon $ml={6} width="24" height="24" viewBox="0 0 24 24">
            <path d="M0 1H16V13H5.500L3 16V13H0Z" fill="#fff" /><path d="M3 4.500H13 M3 7.500H13 M3 10H9" stroke="#1a2741" strokeWidth="1" />
            <circle cx="15.500" cy="16" r="8" fill="#35393f" stroke="#7d8188" />
            <text x="15.500" y="20.500" fontSize="12" fontFamily="Open Sans" textAnchor="middle" fill="#fff">1</text>
          </Icon>
          <ShowDesktop />
        </Tray>
      </Taskbar>
    </Shell>
  );
}
